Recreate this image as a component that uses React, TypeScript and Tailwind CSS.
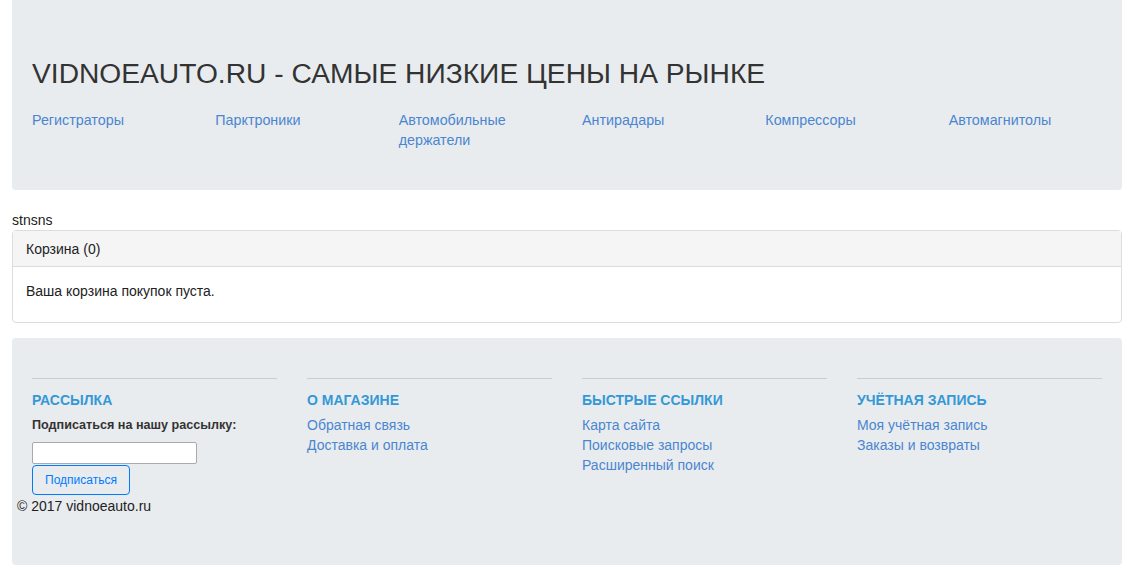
import React from "react";

const navLinks = [
  "Регистраторы",
  "Парктроники",
  "Автомобильные держатели",
  "Антирадары",
  "Компрессоры",
  "Автомагнитолы",
];

const footerCols = [
  { title: "О магазине", links: ["Обратная связь", "Доставка и оплата"] },
  {
    title: "Быстрые ссылки",
    links: ["Карта сайта", "Поисковые запросы", "Расширенный поиск"],
  },
  {
    title: "Учётная запись",
    links: ["Моя учётная запись", "Заказы и возвраты"],
  },
];

const App = () => {
  return (
    <div
      className="min-h-[587px] bg-white text-[14px] leading-5 text-[#222]"
      style={{ fontFamily: '"Liberation Sans", Arial, sans-serif' }}
    >
      <div className="ml-3 w-[1110px]">
        {/* header */}
        <div className="rounded-b-[4px] bg-[#e9ecef] px-5 pt-[56px] pb-[40px]">
          <h1 className="text-[28.2px] leading-[34px] text-[#333]">
            VIDNOEAUTO.RU - САМЫЕ НИЗКИЕ ЦЕНЫ НА РЫНКЕ
          </h1>
          <div className="mt-[20px] grid grid-cols-6 gap-x-[30px]">
            {navLinks.map((l) => (
              <a key={l} href="#" className="text-[14.3px] text-[#4a86cf]">
                {l}
              </a>
            ))}
          </div>
        </div>

        <div className="mt-5 leading-5">stnsns</div>

        {/* cart */}
        <div className="rounded-[4px] border border-[#ddd]">
          <div className="flex h-9 items-center border-b border-[#ddd] bg-[#f5f5f5] px-[13px]">
            Корзина (0)
          </div>
          <div className="px-[13px] pt-[14px] pb-[21px]">
            Ваша корзина покупок пуста.
          </div>
        </div>

        {/* footer */}
        <div className="mt-[15px] h-[227px] rounded-[4px] bg-[#e9ecef]">
          <div className="grid grid-cols-4 gap-x-[30px] px-5 pt-[40px]">
            <div>
              <div className="border-t border-[#ccc]" />
              <h5 className="mt-[11px] text-[14px] font-bold uppercase leading-5 text-[#3498d6]">
                Рассылка
              </h5>
              <div className="mt-[5px] text-[12.6px] font-bold text-[#333]">
                Подписаться на нашу рассылку:
              </div>
              <input
                type="text"
                className="mt-[7px] block h-[22px] w-[165px] rounded-[2px] border border-[#aaa] bg-white"
              />
              <button className="mt-px h-[30px] rounded-[4px] border border-[#007bff] px-[12px] text-[12px] text-[#007bff]">
                Подписаться
              </button>
            </div>
            {footerCols.map((c) => (
              <div key={c.title}>
                <div className="border-t border-[#ccc]" />
                <h5 className="mt-[11px] text-[14px] font-bold uppercase leading-5 text-[#3498d6]">
                  {c.title}
                </h5>
                <ul className="mt-[5px]">
                  {c.links.map((l) => (
                    <li key={l}>
                      <a href="#" className="text-[#4a86cf]">
                        {l}
                      </a>
                    </li>
                  ))}
                </ul>
              </div>
            ))}
          </div>
          <div className="ml-[5px] mt-px leading-5">© 2017 vidnoeauto.ru</div>
        </div>
      </div>
    </div>
  );
};

export default App;
